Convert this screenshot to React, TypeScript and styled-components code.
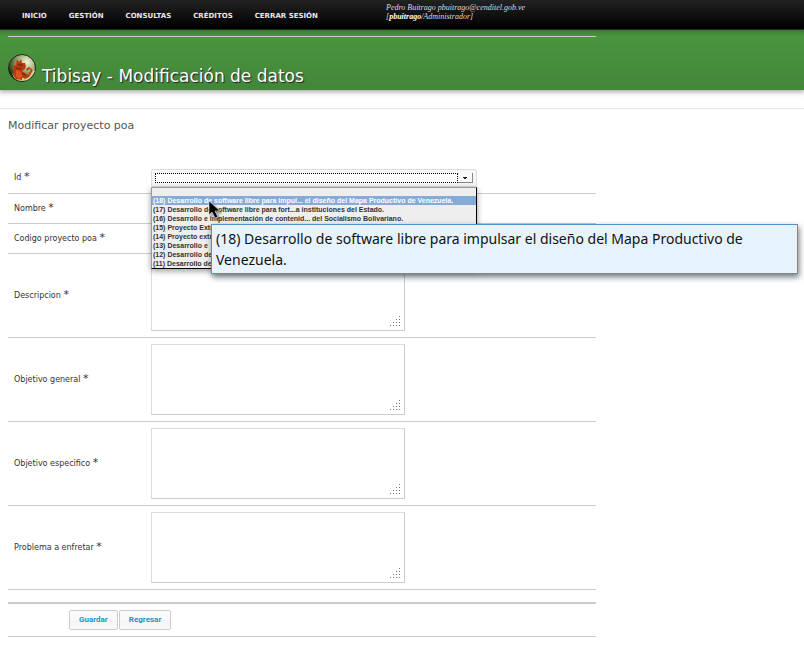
import React from 'react';
import styled, { createGlobalStyle } from 'styled-components';

const GlobalStyle = createGlobalStyle`
  *, *::before, *::after { box-sizing: border-box; }
  body { margin: 0; background: #fff; color: #555; font-family: 'DejaVu Sans', sans-serif; }
  button, input, textarea, select { font: inherit; }
`;

const TopBar = styled.header`
  display: flex;
  height: 30px;
  padding-left: 22px;
  background: linear-gradient(#222, #000);
  border-bottom: 1px solid #1c3a17;
`;

const Menu = styled.nav`
  display: flex;
  flex: 0 0 364px;
  align-items: center;
  gap: 22px;
  padding-top: 2px;
`;

const MenuLink = styled.a`
  color: #e8e8e8;
  font: bold 7px/10px 'DejaVu Sans', sans-serif;
  text-decoration: none;
  text-transform: uppercase;
  white-space: nowrap;
`;

const UserInfo = styled.div`
  padding-top: 3px;
  color: #ddd;
  font: italic 8px/9px 'Liberation Serif', serif;
  white-space: nowrap;

  strong { color: #fff; }
`;

const Banner = styled.div`
  height: 60px;
  padding: 6px 8px 0;
  background: linear-gradient(#3b7a31, #4a953e 6px, #43863a);
  box-shadow: 0 1px 5px 1px rgba(0, 0, 0, 0.35);
`;

const BannerRule = styled.div`
  max-width: 588px;
  height: 1px;
  background: #ccc;
`;

const Brand = styled.div`
  display: flex;
  align-items: flex-end;
  gap: 6px;
  padding-top: 17px;
`;

const Title = styled.h1`
  margin: 0;
  color: #fff;
  font-size: 17px;
  font-weight: normal;
  line-height: 12px;
  text-shadow: 1px 1px 1px #222;
  white-space: nowrap;
`;

const Divider = styled.div`
  height: 19px;
  border-bottom: 1px solid #e5e5e5;
`;

const Content = styled.main`
  max-width: 604px;
  padding: 9px 8px 0;
`;

const Subtitle = styled.h2`
  margin: 0 0 29px;
  color: #555;
  font-size: 11px;
  font-weight: normal;
  line-height: 16px;
`;

const Row = styled.div`
  display: grid;
  grid-template-columns: 137px 1fr;
  align-items: center;
  padding: 6px 0 6px 6px;
  border-bottom: 1px solid #ccc;
`;

const Label = styled.label`
  color: #333;
  font-size: 8px;
  line-height: 12px;
`;

const Asterisk = styled.span`
  font-size: 11px;
  line-height: 8px;
`;

const TextInput = styled.input`
  display: block;
  width: 180px;
  height: 17px;
  padding: 0 3px;
  border: 1px solid #ccc;
  font-size: 8px;
`;

const AreaFrame = styled.div`
  position: relative;
  width: 254px;
`;

const TextArea = styled.textarea`
  display: block;
  width: 100%;
  height: 71px;
  padding: 3px;
  border: 1px solid #ccc;
  border-top-color: #ddd;
  border-left-color: #ddd;
  background: #fff;
  font-size: 8px;
  outline: none;
  resize: none;
`;

const Grip = styled.svg`
  position: absolute;
  right: 5px;
  bottom: 5px;
  fill: #777;
`;

const Combo = styled.div`
  position: relative;
  width: 326px;
`;

const ComboFrame = styled.div`
  display: flex;
  height: 18px;
  padding: 3px;
  border: 1px solid #ddd;
  border-radius: 2px;
  background: #f7f7f7;
`;

const Select = styled.select`
  flex: 1;
  min-width: 0;
  height: 10px;
  padding: 0 2px;
  appearance: none;
  border: 1px dotted #000;
  background: #fff;
  font-size: 7px;
  line-height: 8px;
  outline: none;
`;

const ComboArrow = styled.svg`
  flex: none;
  border-right: 1px solid #888;
  border-bottom: 1px solid #888;
  background: #fafafa;
`;

const Options = styled.ul`
  position: absolute;
  z-index: 1;
  top: 18px;
  left: 0;
  width: 100%;
  margin: 0;
  padding: 1px 0 0;
  border: 1px solid #000;
  border-top: 1px solid #999;
  border-left: 1px solid #999;
  background: #eee;
  box-shadow: 0 2px 6px rgba(0, 0, 0, 0.4);
  list-style: none;
`;

const Option = styled.li<{ $active?: boolean }>`
  height: 9px;
  padding-left: 1px;
  overflow: hidden;
  background: ${(p) => (p.$active ? '#86abd9' : 'transparent')};
  color: ${(p) => (p.$active ? '#fff' : '#333')};
  font: bold 7px/10px 'Liberation Sans', sans-serif;
  white-space: nowrap;

  &:first-child { height: 7px; }
`;

const Tooltip = styled.div`
  position: absolute;
  z-index: 2;
  top: 55px;
  left: 60px;
  width: 587px;
  padding: 3px 4px;
  border: 1px solid #5294c8;
  background: #e6f3fd;
  box-shadow: 1px 3px 6px rgba(0, 0, 0, 0.55);
  color: #111;
  font: 14px/21px 'Noto Sans', sans-serif;
`;

const Pointer = styled.svg`
  position: absolute;
  z-index: 3;
  top: 31px;
  left: 57px;
  filter: drop-shadow(2px 2px 1px rgba(0, 0, 0, 0.4));
`;

const Actions = styled.div`
  display: flex;
  gap: 1px;
  margin-top: 12px;
  padding: 6px 0 6px 61px;
  border-top: 2px solid #ccc;
  border-bottom: 1px solid #ccc;
`;

const Button = styled.button`
  height: 20px;
  padding: 0 9px;
  border: 1px solid #ccc;
  border-radius: 2px;
  background: linear-gradient(#fafafa 50%, #f4f4f4 50%, #fafafa);
  color: #1c94c4;
  font: bold 8px/16px 'Roboto', sans-serif;
`;

const menu = ['Inicio', 'Gestión', 'Consultas', 'Créditos', 'Cerrar sesión'];

const projects = [
  '',
  '(18) Desarrollo de software libre para impul... el diseño del Mapa Productivo de Venezuela.',
  '(17) Desarrollo de software libre para fort...a instituciones del Estado.',
  '(16) Desarrollo e implementación de contenid... del Socialismo Bolivariano.',
  '(15) Proyecto Extra',
  '(14) Proyecto extra',
  '(13) Desarrollo e',
  '(12) Desarrollo de',
  '(11) Desarrollo de',
];

const areas = [
  ['descripcion', 'Descripcion'],
  ['objetivo-general', 'Objetivo general'],
  ['objetivo-especifico', 'Objetivo especifico'],
  ['problema', 'Problema a enfretar'],
];

function Logo() {
  return (
    <svg width="28" height="28" viewBox="0 0 28 28" aria-hidden="true">
      <defs>
        <radialGradient id="orb" cx="68%" cy="28%" r="75%">
          <stop offset="0" stopColor="#f0f3d8" />
          <stop offset="0.4" stopColor="#a9b884" />
          <stop offset="0.8" stopColor="#4b5c2e" />
          <stop offset="1" stopColor="#172610" />
        </radialGradient>
      </defs>
      <circle cx="14" cy="14" r="13.5" fill="url(#orb)" stroke="#1d2e15" />
      <path d="M4 19Q6 27 14 27Q23 27 27 17L24 14L19 24L8 23Z" fill="#d8c98b" />
      <path
        d="M9 5L11 8L13 5L14 9L17 9L18 12L17 15L14 17L17 19L20 21L23 16L21 15L19 17L18 15L21 13L25 16L21 23L17 25L14 23L14 26L8 25L5 21L6 17L5 12L8 11Z"
        fill="#b93a0d"
      />
      <path d="M8 16L13 18L14 22L12 25L8 23Z" fill="#dd551a" />
      <path d="M10 11H15M8 14L13 15M14 19L18 22" stroke="#65200a" fill="none" />
    </svg>
  );
}

function GripDots() {
  const dots: React.ReactElement[] = [];
  for (let r = 0; r < 4; r++) {
    for (let c = 3 - r; c < 4; c++) {
      dots.push(<rect key={`${r}-${c}`} x={c * 3} y={r * 3} width="1" height="1" />);
    }
  }
  return (
    <Grip width="10" height="10" aria-hidden="true">
      {dots}
    </Grip>
  );
}

function FieldLabel({ id, text }: { id: string; text: string }) {
  return (
    <Label htmlFor={id}>
      {text} <Asterisk>*</Asterisk>
    </Label>
  );
}

export default function App() {
  return (
    <>
      <GlobalStyle />
      <TopBar>
        <Menu>
          {menu.map((item) => (
            <MenuLink key={item} href="#">
              {item}
            </MenuLink>
          ))}
        </Menu>
        <UserInfo>
          Pedro Buitrago pbuitrago@cenditel.gob.ve
          <br />[<strong>pbuitrago</strong>/Administrador]
        </UserInfo>
      </TopBar>
      <Banner>
        <BannerRule />
        <Brand>
          <Logo />
          <Title>Tibisay - Modificación de datos</Title>
        </Brand>
      </Banner>
      <Divider />
      <Content>
        <Subtitle>Modificar proyecto poa</Subtitle>
        <form>
          <Row>
            <FieldLabel id="id" text="Id" />
            <Combo>
              <ComboFrame>
                <Select id="id" defaultValue="">
                  {projects.map((p) => (
                    <option key={p} value={p}>
                      {p}
                    </option>
                  ))}
                </Select>
                <ComboArrow width="15" height="10" aria-hidden="true">
                  <path d="M5 4H9V5H8V6H6V5H5Z" fill="#222" />
                </ComboArrow>
              </ComboFrame>
              <Options role="listbox" aria-label="Id">
                {projects.map((p, i) => (
                  <Option key={p} role="option" aria-selected={i === 1} $active={i === 1}>
                    {p}
                  </Option>
                ))}
              </Options>
              <Tooltip role="tooltip">
                (18) Desarrollo de software libre para impulsar el diseño del Mapa Productivo de Venezuela.
              </Tooltip>
              <Pointer width="14" height="20" viewBox="0 0 14 20" aria-hidden="true">
                <path d="M1 1V15L4 12L7 18L10 17L7 11H12Z" fill="#000" stroke="#eee" strokeWidth="0.6" />
              </Pointer>
            </Combo>
          </Row>
          <Row>
            <FieldLabel id="nombre" text="Nombre" />
            <TextInput id="nombre" />
          </Row>
          <Row>
            <FieldLabel id="codigo" text="Codigo proyecto poa" />
            <TextInput id="codigo" />
          </Row>
          {areas.map(([id, text]) => (
            <Row key={id}>
              <FieldLabel id={id} text={text} />
              <AreaFrame>
                <TextArea id={id} />
                <GripDots />
              </AreaFrame>
            </Row>
          ))}
          <Actions>
            <Button type="button">Guardar</Button>
            <Button type="button">Regresar</Button>
          </Actions>
        </form>
      </Content>
    </>
  );
}
